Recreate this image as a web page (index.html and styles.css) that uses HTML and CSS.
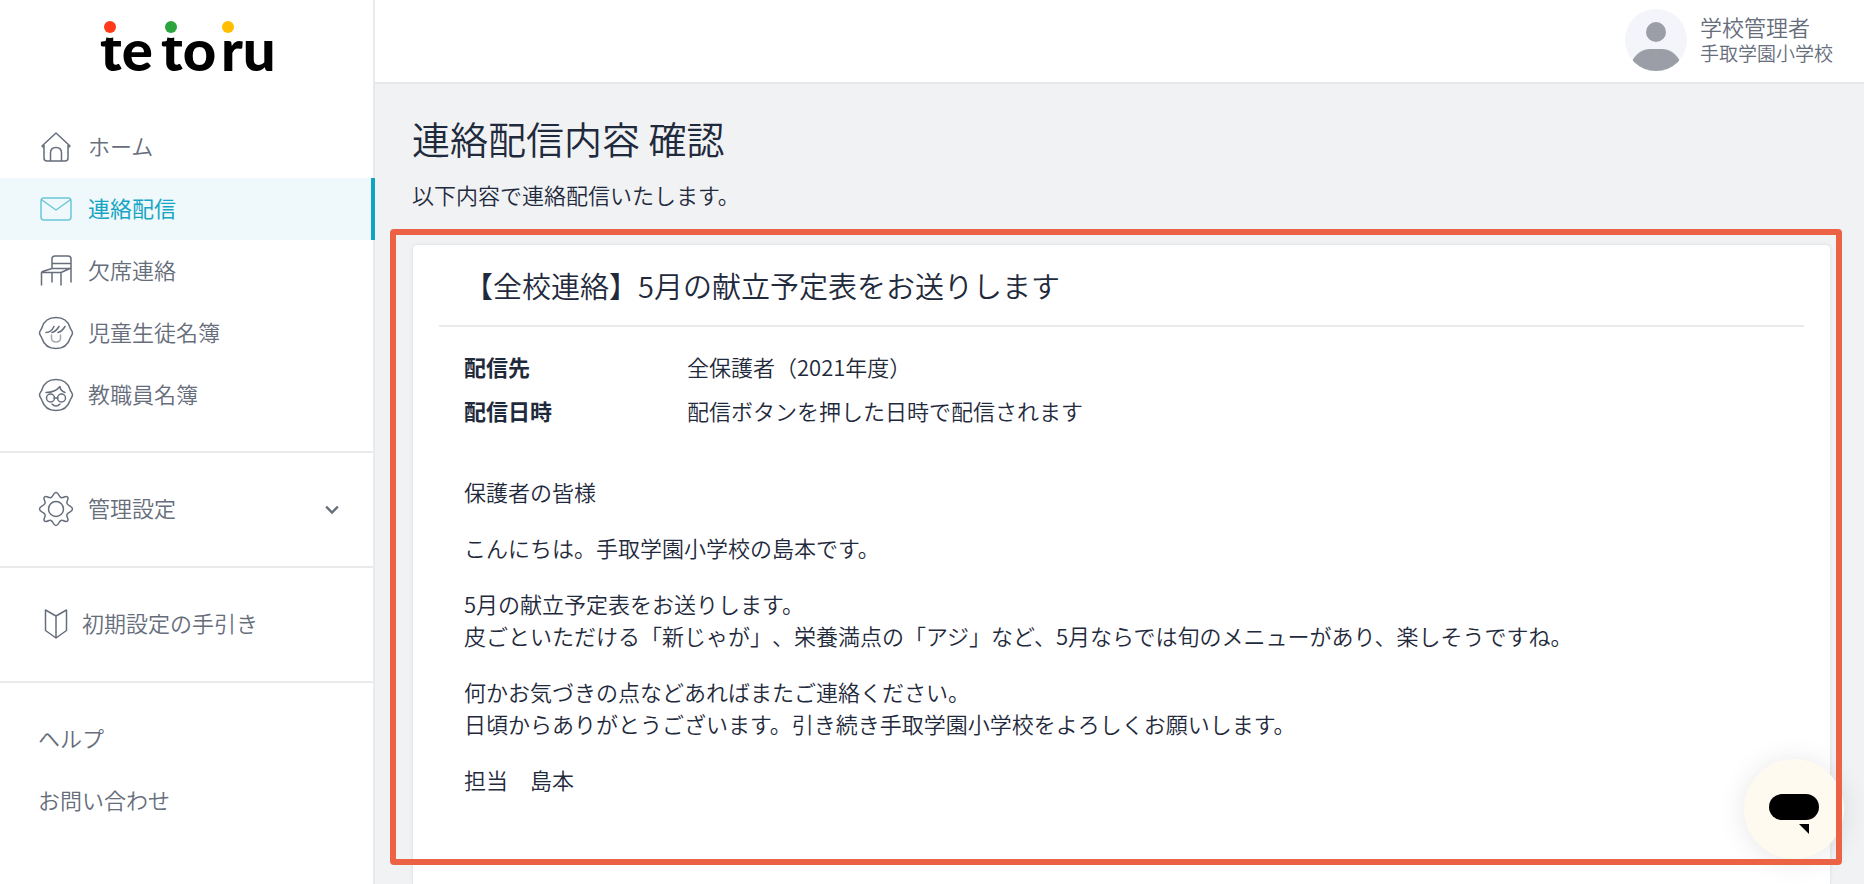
FILE: index.html
```
<!DOCTYPE html>
<html lang="ja">
<head>
<meta charset="utf-8">
<title>連絡配信内容 確認</title>
<link rel="stylesheet" href="styles.css">
</head>
<body>
<div class="app">
  <aside class="sidebar">
    <a class="logo" href="#" aria-label="tetoru">
      <svg width="190" height="80" viewBox="0 0 190 80">
        <g class="logo-text">
          <text x="8" y="53">te</text>
          <text x="69" y="53">to</text>
          <text x="129" y="53">ru</text>
        </g>
        <g fill="#fff"><circle cx="18" cy="9" r="11"/><circle cx="79" cy="9" r="11"/></g>
        <circle cx="18" cy="9" r="6" fill="#ff3a1a"/>
        <circle cx="79" cy="9" r="6" fill="#2ca63c"/>
        <circle cx="136" cy="9" r="6" fill="#ffbe00"/>
      </svg>
    </a>
    <nav class="nav">
      <a class="item" href="#">
        <svg class="icon" viewBox="0 0 36 36"><path d="M4 17 18 4l14 13M6 16v13q0 3 3 3h18q3 0 3-3V16M4 17l2 2M32 17l-2 2M12.500 32V24q0-5.500 5.500-5.500t5.500 5.500v8"/></svg>
        <span>ホーム</span></a>
      <a class="item active" href="#" aria-current="page">
        <svg class="icon" viewBox="0 0 36 36"><rect x="3" y="7" width="30" height="22" rx="3"/><path d="m4 9 14 10L32 9"/></svg>
        <span>連絡配信</span></a>
      <a class="item" href="#">
        <svg class="icon" viewBox="0 0 36 36"><path d="M14 15V6q0-3 3-3h13q3 0 3 3v23M14 10.500h19M14 15.500h19M3.500 32V20q0-1 1-1.500L14 15.500M3.500 19.500H23L33 15M14 20v9M23 20v12"/></svg>
        <span>欠席連絡</span></a>
      <a class="item" href="#">
        <svg class="icon" viewBox="0 0 36 36"><path d="M4 12.500C6 6 11 2.500 18 2.500s12 3.500 14 10c.5 2 2.500 3.500 2.500 5.500s-2 3.500-2.500 5.500c-2 6.500-7 10-14 10S6 30 4 23.500C3.500 21.500 1.500 20 1.500 18s2-3.500 2.500-5.500z"/><path d="M8 17.500q5 0 8-6M14 17.500q4-1 7-6M20 17.500q4-1 7-6"/><path class="soft" d="M13.500 20v3q0 4 4.500 4t4.500-4v-3"/></svg>
        <span>児童生徒名簿</span></a>
      <a class="item" href="#">
        <svg class="icon" viewBox="0 0 36 36"><path d="M4 12.500C6 6 11 2.500 18 2.500s12 3.500 14 10c.5 2 2.500 3.500 2.500 5.500s-2 3.500-2.500 5.500c-2 6.500-7 10-14 10S6 30 4 23.500C3.500 21.500 1.500 20 1.500 18s2-3.500 2.500-5.500zM8 15.500q9 0 14-6 0 4 5 6M16 21h4M14 27q4 4 8 0"/><circle cx="12.500" cy="21" r="4"/><circle cx="23.500" cy="21" r="4"/></svg>
        <span>教職員名簿</span></a>
    </nav>
    <div class="group">
      <button class="item" type="button" aria-expanded="false">
        <svg class="icon" viewBox="0 0 36 36"><circle cx="18" cy="18" r="7.500"/><path d="M18 1.500c3 0 2.500 4 5 5s4.500-2.500 6.500-.5-1.500 4-.5 6.500 5.500 2.500 5.500 5.500-4.500 3-5.500 5.500 2.500 4.500.5 6.500-4-1.500-6.500-.5-2 5-5 5-2.500-4-5-5-4.500 2.500-6.500.5 1.500-4 .5-6.500S1.500 21 1.500 18s4.500-3 5.500-5.500-2.500-4.500-.5-6.500 4 1.500 6.500.5 2-5 5-5z"/></svg>
        <span>管理設定</span>
        <svg class="chevron" viewBox="0 0 12 12"><path d="m1 4 5 5 5-5"/></svg>
      </button>
    </div>
    <div class="group">
      <a class="item guide" href="#">
        <svg class="icon" viewBox="0 0 36 36"><path d="M7.500 4 18 10 28.500 4v20.500L18 32 7.500 24.500zM18 10v22"/></svg>
        <span>初期設定の手引き</span></a>
    </div>
    <div class="group">
      <a class="item" href="#"><span>ヘルプ</span></a>
      <a class="item" href="#"><span>お問い合わせ</span></a>
    </div>
  </aside>
  <div class="content">
    <header class="topbar">
      <svg class="avatar" viewBox="0 0 62 62"><defs><clipPath id="face"><circle cx="31" cy="31" r="31"/></clipPath></defs><circle cx="31" cy="31" r="31" fill="#f3f5fa"/><g fill="#9b9ea6" clip-path="url(#face)"><circle cx="31" cy="23" r="10"/><path d="M6 54q7-14 19-14h12q12 0 19 14v8H6z"/></g></svg>
      <div class="user"><div class="name">学校管理者</div><div class="school">手取学園小学校</div></div>
    </header>
    <main class="main">
      <h1>連絡配信内容 確認</h1>
      <p class="lead">以下内容で連絡配信いたします。</p>
      <article class="card">
        <h2>【全校連絡】5月の献立予定表をお送りします</h2>
        <dl class="meta">
          <dt>配信先</dt><dd>全保護者（2021年度）</dd>
          <dt>配信日時</dt><dd>配信ボタンを押した日時で配信されます</dd>
        </dl>
        <div class="message">
          <p>保護者の皆様</p>
          <p>こんにちは。手取学園小学校の島本です。</p>
          <p>5月の献立予定表をお送りします。<br>皮ごといただける「新じゃが」、栄養満点の「アジ」など、5月ならでは旬のメニューがあり、楽しそうですね。</p>
          <p>何かお気づきの点などあればまたご連絡ください。<br>日頃からありがとうございます。引き続き手取学園小学校をよろしくお願いします。</p>
          <p>担当　島本</p>
        </div>
      </article>
    </main>
  </div>
</div>
<button class="chat" type="button" aria-label="チャット">
  <svg viewBox="0 0 100 100"><rect x="25" y="35" width="50" height="26" rx="13"/><path d="M55 65h10v10z"/></svg>
</button>
<div class="highlight"></div>
</body>
</html>
```
FILE: styles.css
```
* { box-sizing: border-box; }
body {
  margin: 0;
  min-height: 100vh;
  position: relative;
  background: #f1f2f4;
  color: #1f2a3c;
  font: 350 22px/32px "Noto Sans CJK JP", sans-serif;
  text-spacing-trim: space-all;
}
h1, h2, p, dl, dd { margin: 0; font-weight: inherit; }
a { color: inherit; text-decoration: none; }
button { border: 0; padding: 0; font: inherit; color: inherit; background: none; cursor: pointer; }
.app { display: flex; min-height: 100vh; }
.sidebar { flex: 0 0 375px; background: #fff; border-right: 2px solid #e9eaec; color: #666d7b; }
.logo { display: block; padding: 18px 0 0 92px; height: 116px; }
.logo svg { display: block; }
.logo-text { font: 900 58px "Lato", sans-serif; fill: #000; }
.nav { padding-bottom: 25px; }
.item { display: flex; align-items: center; gap: 14px; width: 100%; height: 62px; padding: 0 38px; text-align: left; }
.item span { padding-bottom: 4px; }
.active { width: auto; margin-right: -2px; color: #17a5c3; background: #eff9fc; font-weight: 400; border-right: 4px solid #0da5c2; }
.active .icon { opacity: .6; }
.icon { flex: none; width: 36px; height: 36px; fill: none; stroke: currentColor; stroke-width: 1.5; stroke-linecap: round; stroke-linejoin: round; }
.soft { opacity: .6; }
.chevron { width: 14px; height: 14px; margin-left: auto; margin-right: -4px; fill: none; stroke: currentColor; stroke-width: 2; }
.group { padding: 25px 0 26px; border-top: 2px solid #e9eaec; }
.guide { gap: 8px; }
.content { flex: 1; min-width: 0; display: flex; flex-direction: column; }
.topbar { display: flex; justify-content: flex-end; gap: 13px; height: 84px; padding: 9px 31px 0 0; background: #fff; border-bottom: 2px solid #e7e8ea; color: #666d7b; }
.avatar { width: 62px; height: 62px; }
.name { line-height: 26px; padding-top: 4px; }
.school { font-size: 19px; line-height: 28px; }
.main { flex: 1; display: flex; flex-direction: column; padding: 30px 33px 0 37px; }
h1 { font-size: 38px; line-height: 48px; }
.lead { margin-top: 16px; }
.card { flex: 1; margin-top: 34px; padding: 0 26px; background: #fff; border: 1px solid #e7e8ea; border-bottom: 0; border-radius: 5px 5px 0 0; box-shadow: 0 0 3px rgba(0, 0, 0, .06); }
h2 { padding: 20px 25px; font-size: 29px; line-height: 40px; border-bottom: 2px solid #e9eaec; }
.meta { display: grid; grid-template-columns: 223px 1fr; row-gap: 12px; padding: 23px 25px 0; }
dt { font-weight: 700; }
.message { display: grid; gap: 24px; padding: 49px 25px 0; }
.highlight { position: absolute; left: 390px; right: 22px; top: 229px; bottom: 19px; border: 6px solid #ec6245; border-radius: 4px; pointer-events: none; }
.chat { position: absolute; right: 20px; bottom: 25px; width: 100px; height: 100px; border-radius: 50%; background: #fffaef; box-shadow: 0 2px 28px rgba(0, 0, 0, .1); }
.chat svg { display: block; }
```
